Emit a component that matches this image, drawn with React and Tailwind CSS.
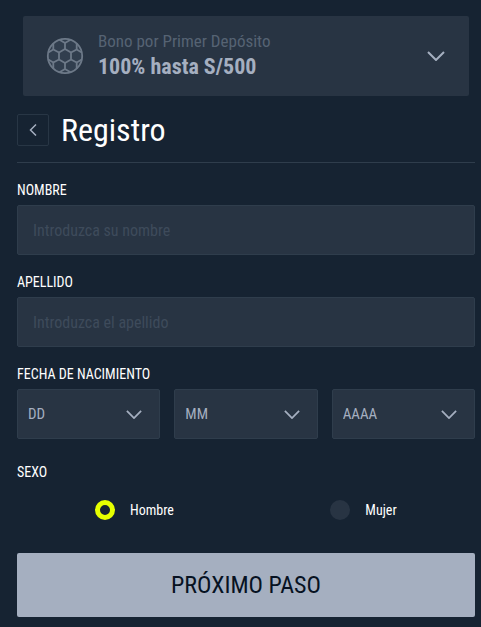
import React, { useState } from 'react';

const dateFields = [
  { id: 'day', label: 'Día', placeholder: 'DD', options: ['01', '02', '03'] },
  { id: 'month', label: 'Mes', placeholder: 'MM', options: ['01', '02', '03'] },
  { id: 'year', label: 'Año', placeholder: 'AAAA', options: ['2000', '2001', '2002'] },
];

function BallIcon() {
  return (
    <svg className="w-[38px] h-[38px] shrink-0" viewBox="0 0 38 38" fill="none" stroke="#6d7988" strokeWidth="1.8" aria-hidden="true">
      <circle cx="19" cy="19" r="17.2" fill="#313e4e" />
      <path d="M19 12l6 3.500v7L19 26l-6-3.500v-7z" />
      <path d="M13 15.500L7.300 12.500l-5 3M25 15.500l5.700-3 5 3M13 22.500l-5.700 3-5-3M25 22.500l5.700 3 5-3" />
      <path d="M7.300 12.500V6.500M30.700 12.500V6.500M7.300 25.500v6M30.700 25.500v6" />
      <path d="M19 12V6l-5.500-3.300M19 6l5.500-3.300M19 26v6l-5.500 3.300M19 32l5.500 3.300" />
    </svg>
  );
}

function Chevron({ className }) {
  return (
    <svg className={className} viewBox="0 0 18 10" fill="none" stroke="#a5afc0" strokeWidth="2" aria-hidden="true">
      <path d="M1 1l8 8 8-8" />
    </svg>
  );
}

function TextField({ id, label, placeholder }) {
  return (
    <div className="mb-[18px]">
      <label htmlFor={id} className="block h-6 text-sm leading-[18px] text-white uppercase">{label}</label>
      <input
        id={id}
        type="text"
        placeholder={placeholder}
        className="block w-full h-[50px] px-[15px] rounded-[2px] border border-[#2f3d4c] bg-[#283443] text-base text-white placeholder:text-[#3e4b5b] outline-none"
      />
    </div>
  );
}

function RadioOption({ value, label, checked, onChange }) {
  return (
    <label className="flex items-center justify-center gap-[15px] pl-1.5 text-sm text-white">
      <input
        type="radio"
        name="sexo"
        value={value}
        checked={checked}
        onChange={() => onChange(value)}
        className="appearance-none w-5 h-5 rounded-full bg-[#283443] checked:bg-[#162332] checked:border-[5px] checked:border-[#e6ff00]"
      />
      {label}
    </label>
  );
}

export default function App() {
  const [sexo, setSexo] = useState('hombre');

  return (
    <div className="min-h-screen bg-[#162332] pt-4 pb-2.5 pl-[17px] pr-1.5 font-['Roboto_Condensed','Roboto',sans-serif]">
      {/* Bonus */}
      <button type="button" className="flex items-center w-[calc(100%-12px)] h-20 mx-1.5 pl-[23px] pr-6 rounded-[2px] bg-[#283443] text-left">
        <BallIcon />
        <span className="flex-1 ml-[14px]">
          <span className="block text-[17px] leading-[22px] text-[#566373]">Bono por Primer Depósito</span>
          <span className="block text-[22px] leading-[30px] font-bold text-[#a5afc0]">100% hasta S/500</span>
        </span>
        <Chevron className="w-[18px] h-2.5" />
      </button>

      <form onSubmit={(e) => e.preventDefault()}>
        <header className="flex items-center gap-3 pt-[18px] pb-4 border-b border-[#2f3d4c]">
          <button type="button" aria-label="Atrás" className="flex items-center justify-center w-8 h-8 rounded-[2px] border border-[#283645]">
            <svg className="w-2 h-3" viewBox="0 0 8 12" fill="none" stroke="#a5afc0" strokeWidth="1.5" aria-hidden="true">
              <path d="M7 .5L1.500 6 7 11.500" />
            </svg>
          </button>
          <h1 className="text-[32px] leading-8 text-white">Registro</h1>
        </header>

        <div className="pt-[18px]">
          <TextField id="nombre" label="Nombre" placeholder="Introduzca su nombre" />
          <TextField id="apellido" label="Apellido" placeholder="Introduzca el apellido" />
        </div>

        <fieldset>
          <legend className="h-6 text-sm leading-[18px] text-white uppercase">Fecha de nacimiento</legend>
          <div className="grid grid-cols-3 gap-[14px]">
            {dateFields.map((field) => (
              <div key={field.id} className="relative">
                <select
                  aria-label={field.label}
                  defaultValue=""
                  className="appearance-none block w-full h-[50px] px-2.5 rounded-[2px] border border-[#2f3d4c] bg-[#283443] text-[15px] text-[#a5afc0] outline-none"
                >
                  <option value="">{field.placeholder}</option>
                  {field.options.map((o) => <option key={o}>{o}</option>)}
                </select>
                <Chevron className="absolute right-[18px] top-[21px] w-4 h-[9px] pointer-events-none" />
              </div>
            ))}
          </div>
        </fieldset>

        <fieldset className="mt-6">
          <legend className="text-sm leading-[18px] text-white uppercase">Sexo</legend>
          <div className="grid grid-cols-2 mt-[19px]">
            <RadioOption value="hombre" label="Hombre" checked={sexo === 'hombre'} onChange={setSexo} />
            <RadioOption value="mujer" label="Mujer" checked={sexo === 'mujer'} onChange={setSexo} />
          </div>
        </fieldset>

        <button type="submit" className="block w-full h-16 mt-[33px] rounded-[2px] bg-[#a5afc0] text-2xl text-[#071222] uppercase">
          Próximo paso
        </button>
      </form>
    </div>
  );
}
